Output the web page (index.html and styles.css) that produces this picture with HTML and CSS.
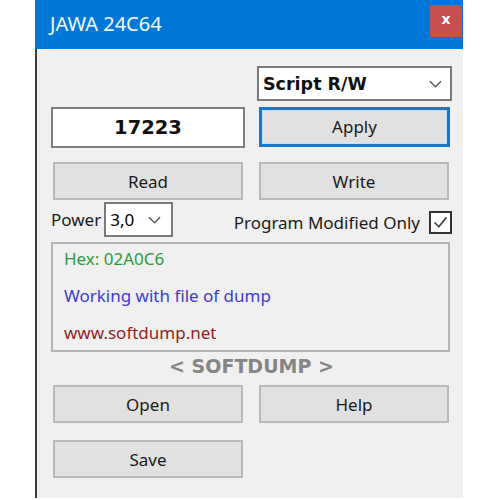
FILE: index.html
```html
<!DOCTYPE html>
<html lang="en">
<head>
    <meta charset="UTF-8">
    <title>JAWA 24C64</title>
    <link rel="stylesheet" href="styles.css">
</head>
<body>
    <div class="window">
        <div class="titlebar">
            <span class="title">JAWA 24C64</span>
            <button class="close-btn">x</button>
        </div>
        <div class="content">
            <div class="row row-mode">
                <div></div>
                <div class="combo combo-mode">
                    <span>Script R/W</span>
                    <svg class="chevron" viewBox="0 0 14 8"><path d="M1 1 L7 7 L13 1"/></svg>
                </div>
            </div>
            <div class="row row-apply">
                <div class="value-box">17223</div>
                <button class="btn btn-apply">Apply</button>
            </div>
            <div class="row row-rw">
                <button class="btn">Read</button>
                <button class="btn">Write</button>
            </div>
            <div class="row row-power">
                <div class="power">
                    <span class="label">Power</span>
                    <div class="combo combo-power">
                        <span>3,0</span>
                        <svg class="chevron" viewBox="0 0 14 8"><path d="M1 1 L7 7 L13 1"/></svg>
                    </div>
                </div>
                <div class="modified">
                    <span class="label">Program Modified Only</span>
                    <span class="checkbox">
                        <svg viewBox="0 0 20 20"><path d="M3 10 L8 15 L17 4"/></svg>
                    </span>
                </div>
            </div>
            <div class="info">
                <div class="info-line hex">Hex: 02A0C6</div>
                <div class="info-line working">Working with file of dump</div>
                <div class="info-line site">www.softdump.net</div>
            </div>
            <div class="brand">&lt; SOFTDUMP &gt;</div>
            <div class="row row-file">
                <button class="btn">Open</button>
                <button class="btn">Help</button>
            </div>
            <div class="row row-save">
                <button class="btn">Save</button>
            </div>
        </div>
    </div>
</body>
</html>
```

FILE: styles.css
```css
body {
    margin: 0;
    background: #ffffff;
    font-family: 'Noto Sans', 'Open Sans', sans-serif;
}

.window {
    margin-left: 35px;
    width: 428px;
    height: 498px;
    display: flex;
    flex-direction: column;
}

.titlebar {
    height: 49px;
    background-color: #0078d7;
    display: flex;
    align-items: center;
    justify-content: space-between;
    padding: 0 1px 0 15px;
    flex-shrink: 0;
}

.title {
    color: #f4f8fc;
    font-size: 20px;
    margin-top: -3px;
}

.close-btn {
    width: 32px;
    height: 32px;
    margin-bottom: 8px;
    border: none;
    background-color: #c74f4f;
    color: #ffffff;
    font-family: 'DejaVu Sans', sans-serif;
    font-weight: bold;
    font-size: 14px;
    padding: 0 0 3px;
}

.content {
    flex: 1;
    background-color: #f0f0f0;
    border-left: 2px solid #3d3d3d;
    padding: 0 11px 0 14px;
}

.row {
    display: grid;
    grid-template-columns: 194px 194px;
    column-gap: 14px;
    align-items: center;
}

.row-mode {
    margin-top: 17px;
}

.row-apply {
    margin-top: 6px;
}

.row-rw {
    margin-top: 14px;
}

.row-power {
    margin-top: 2px;
    grid-template-columns: auto auto;
    justify-content: space-between;
}

.row-file {
    margin-top: 8px;
}

.row-save {
    margin-top: 17px;
}

.btn {
    margin-left: 2px;
    width: 190px;
    height: 38px;
    background-color: #e1e1e1;
    border: 2px solid #b9b9b9;
    font-family: inherit;
    font-size: 17px;
    color: #1a1a1a;
    padding: 0;
}

.row .btn:nth-child(2) {
    margin-left: 0;
}

.btn-apply {
    width: 191px;
    height: 40px;
    margin-top: -2px;
    border: 3px solid #1677cf;
    box-shadow: inset 0 0 0 1px #bfe0f6;
}

.combo {
    background-color: #ffffff;
    border: 2px solid #7a7a7a;
    display: flex;
    align-items: center;
    justify-content: space-between;
    box-sizing: border-box;
}

.combo-mode {
    margin-left: -2px;
    width: 195px;
    height: 35px;
    padding: 0 8px 0 4px;
    font-family: 'DejaVu Sans', sans-serif;
    font-weight: bold;
    font-size: 17.5px;
    color: #111111;
}

.chevron {
    width: 13px;
    height: 8px;
    fill: none;
    stroke: #5a5a5a;
    stroke-width: 1.6;
}

.value-box {
    width: 194px;
    height: 41px;
    box-sizing: border-box;
    background-color: #ffffff;
    border: 2px solid #7f7f7f;
    display: flex;
    align-items: center;
    justify-content: center;
    font-family: 'DejaVu Sans', sans-serif;
    font-weight: bold;
    font-size: 19.5px;
    color: #111111;
}

.power {
    display: flex;
    align-items: center;
}

.label {
    font-size: 17px;
    color: #1a1a1a;
}

.combo-power {
    margin-left: 3px;
    width: 69px;
    height: 35px;
    padding: 0 10px 0 4px;
}

.combo-power span {
    font-size: 17px;
}

.modified {
    display: flex;
    align-items: center;
    margin-top: 6px;
}

.checkbox {
    margin-left: 9px;
    width: 23px;
    height: 23px;
    box-sizing: border-box;
    border: 2px solid #333333;
    background-color: #ffffff;
    display: flex;
    align-items: center;
    justify-content: center;
}

.checkbox svg {
    width: 17px;
    height: 17px;
    fill: none;
    stroke: #444444;
    stroke-width: 2;
}

.info {
    margin-top: 5px;
    width: 399px;
    height: 110px;
    box-sizing: border-box;
    border: 2px solid #b4b4b4;
    padding: 2px 0 0 11px;
}

.info-line {
    font-size: 17px;
    height: 37px;
    line-height: 26px;
}

.hex {
    color: #2f9a3c;
}

.working {
    color: #3c3cd0;
}

.site {
    color: #8e1f1f;
}

.brand {
    text-align: center;
    margin-top: 3px;
    font-family: 'DejaVu Sans', sans-serif;
    font-weight: bold;
    font-size: 19px;
    color: #858585;
    height: 22px;
    line-height: 22px;
}
```
